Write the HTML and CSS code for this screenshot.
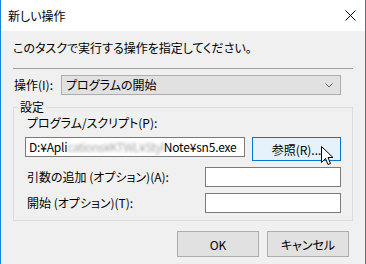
FILE: index.html
```html
<!DOCTYPE html>
<html lang="ja">
<head>
    <meta charset="UTF-8">
    <title>新しい操作</title>
    <link rel="stylesheet" href="styles.css">
</head>
<body>
    <div class="window">
        <div class="titlebar">
            <span class="title">新しい操作</span>
            <svg class="close" width="11" height="11" viewBox="0 0 11 11">
                <path d="M0.5 0.5 L10.5 10.5 M10.5 0.5 L0.5 10.5" stroke="#000" stroke-width="1" fill="none"/>
            </svg>
        </div>

        <div class="content">
            <p class="intro">このタスクで実行する操作を指定してください。</p>
            <div class="divider"></div>

            <div class="action-row">
                <label class="action-label">操作(I):</label>
                <div class="combo">
                    <span>プログラムの開始</span>
                    <svg class="chevron" width="8" height="5" viewBox="0 0 8 5">
                        <path d="M0.5 0.5 L4 4 L7.5 0.5" stroke="#606060" fill="none"/>
                    </svg>
                </div>
            </div>

            <fieldset class="settings">
                <legend>設定</legend>
                <div class="group-body">
                    <div class="field-label">プログラム/スクリプト(P):</div>
                    <div class="path-row">
                        <div class="textbox path">D:¥Apli<span class="blurred">cations¥KTWL¥Styl</span>Note¥sn5.exe</div>
                        <button class="browse">参照(R)...</button>
                    </div>
                    <div class="opt-row">
                        <span class="opt-label">引数の追加 (オプション)(A):</span>
                        <div class="textbox opt"></div>
                    </div>
                    <div class="opt-row">
                        <span class="opt-label">開始 (オプション)(T):</span>
                        <div class="textbox opt"></div>
                    </div>
                </div>
            </fieldset>

            <div class="buttons">
                <button class="btn">OK</button>
                <button class="btn">キャンセル</button>
            </div>
        </div>

        <!-- mouse pointer over the browse button -->
        <svg class="cursor" width="13" height="20" viewBox="0 0 13 20">
            <path d="M0.5 0.5 V16.5 L4.5 12.5 L7 18.5 L9.5 17.5 L7 11.5 H12 Z" fill="#fff" stroke="#000" stroke-width="1" stroke-linejoin="miter"/>
        </svg>
    </div>
</body>
</html>
```

FILE: styles.css
```css
* {
    box-sizing: border-box;
}
body {
    margin: 0;
    font-family: "Noto Sans CJK JP", "Noto Sans", sans-serif;
    font-size: 12px;
    font-feature-settings: "palt";
    color: #000;
}
.window {
    position: relative;
    width: 366px;
    height: 264px;
    border-left: 1px solid #1883d7;
    border-right: 1px solid #1883d7;
    background-color: #f0f0f0;
    overflow: hidden;
}
.titlebar {
    height: 31px;
    background-color: #fff;
    display: flex;
    align-items: center;
    justify-content: space-between;
    padding: 0 9px 0 7px;
}
.title {
    line-height: 16px;
}
.close {
    display: block;
}
.content {
    padding: 0 12px;
}
.intro {
    margin: 9px 0 0 0;
    line-height: 16px;
}
.divider {
    margin-top: 12px;
    height: 1px;
    background-color: #a0a0a0;
}
.action-row {
    display: flex;
    align-items: center;
    margin-top: 6px;
}
.action-label {
    width: 48px;
    padding-left: 1px;
    line-height: 16px;
}
.combo {
    width: 280px;
    height: 20px;
    border: 1px solid #adadad;
    background-color: #e1e1e1;
    display: flex;
    align-items: center;
    justify-content: space-between;
    padding: 0 7px 0 4px;
    line-height: 16px;
}
.chevron {
    display: block;
}
.settings {
    margin: 4px 0 0 0;
    border: 1px solid #dcdcdc;
    padding: 0 11px 7px 4px;
    min-width: 0;
}
.settings legend {
    padding: 0 2px;
    line-height: 16px;
}
.group-body {
    padding-left: 7px;
}
.field-label {
    margin-left: 2px;
    line-height: 16px;
}
.path-row {
    display: flex;
    justify-content: space-between;
    align-items: flex-start;
    margin-top: 6px;
}
.textbox {
    height: 20px;
    border: 1px solid #7a7a7a;
    background-color: #fff;
    line-height: 18px;
    padding: 0 3px;
    white-space: nowrap;
    overflow: hidden;
}
.textbox.path {
    width: 220px;
    letter-spacing: -0.2px;
}
.blurred {
    color: #a8a8a8;
    filter: blur(1.4px);
    letter-spacing: -0.6px;
}
.browse {
    width: 89px;
    height: 24px;
    margin: 0;
    border: 1px solid #0078d7;
    background-color: #e5f1fb;
    font: inherit;
    color: #000;
    padding: 0;
}
.opt-row {
    display: flex;
    justify-content: space-between;
    align-items: center;
    margin-top: 6px;
}
.opt-label {
    margin-left: 2px;
    line-height: 16px;
}
.textbox.opt {
    width: 136px;
}
.buttons {
    display: flex;
    justify-content: flex-end;
    gap: 8px;
    margin-top: 10px;
    padding-right: 4px;
}
.btn {
    width: 82px;
    height: 26px;
    margin: 0;
    border: 1px solid #adadad;
    background-color: #e1e1e1;
    font: inherit;
    color: #000;
    padding: 0;
}
.cursor {
    position: absolute;
    left: 320px;
    top: 146px;
}
```
